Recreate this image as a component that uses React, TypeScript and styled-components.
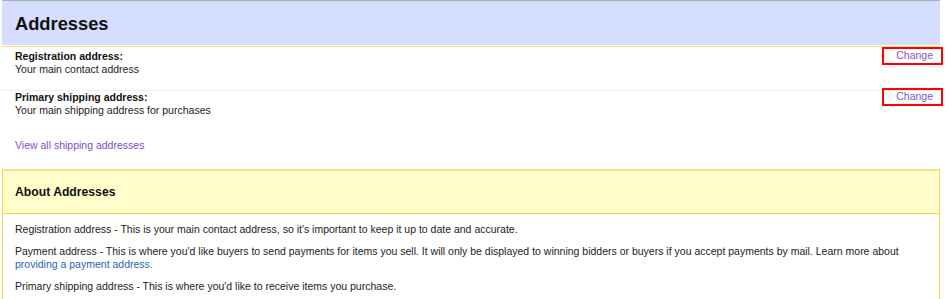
import React from "react";
import styled, { createGlobalStyle } from "styled-components";

const GlobalStyle = createGlobalStyle`
  html {
    overflow-y: scroll;
  }
  html::-webkit-scrollbar {
    width: 4px;
  }
  html::-webkit-scrollbar-track {
    background: #f1f1f1;
  }
  html::-webkit-scrollbar-thumb {
    background: #c4c4c4;
  }
  body {
    margin: 0;
    background: #fff;
    font-family: "Liberation Sans", Arial, sans-serif;
    font-size: 10.5px;
    color: #222;
  }
`;

const Page = styled.div`
  width: 938px;
  margin-left: 2px;
  padding-bottom: 40px;
`;

const PageHeader = styled.div`
  height: 43px;
  border-top: 1px solid #aeaeae;
  background: #d5defe;
  display: flex;
  align-items: center;
  padding: 1px 0 0 13px;
  box-shadow: 0 1px 0 #fff, 0 2px 0 #f8de7c;
  margin-bottom: 3px;
`;

const PageTitle = styled.h1`
  margin: 0;
  font-size: 18.3px;
  font-weight: bold;
  color: #111;
`;

const Row = styled.div<{ $first?: boolean }>`
  display: flex;
  justify-content: space-between;
  align-items: flex-start;
  padding: ${(p) => (p.$first ? "2px 0 14px 13px" : "0 0 0 13px")};
  border-top: ${(p) => (p.$first ? "none" : "1px solid #efefef")};
  line-height: 13px;
`;

const Label = styled.div`
  font-weight: bold;
  color: #111;
`;

const Hint = styled.div`
  color: #222;
`;

const ChangeLink = styled.a`
  display: block;
  color: #7a5ac9;
  text-decoration: none;
  line-height: 13px;
  padding: 0 8px 1px 12px;
  margin: -1px -1px 0 0;
  outline: 2px solid #f00;
  cursor: pointer;
`;

const ViewAll = styled.a`
  display: inline-block;
  margin: 22px 0 17px 13px;
  line-height: 13px;
  color: #7a4fc8;
  text-decoration: none;
`;

const AboutBox = styled.div`
  border: 1px solid #f6d64a;
  border-top: 2px solid #fbe384;
`;

const AboutHeader = styled.div`
  height: 42px;
  background: #fffdcb;
  border-bottom: 1px solid #f6d64a;
  display: flex;
  align-items: center;
  padding-left: 12px;
`;

const AboutTitle = styled.h2`
  margin: 0;
  font-size: 12.2px;
  font-weight: bold;
  color: #111;
`;

const AboutBody = styled.div`
  padding: 9px 12px 10px;
`;

const Para = styled.p`
  margin: 0 0 9.5px;
  line-height: 12.5px;
  color: #222;
`;

const InlineLink = styled.a`
  color: #2b63b7;
  text-decoration: none;
`;

export default function App() {
  return (
    <Page>
      <GlobalStyle />
      <PageHeader>
        <PageTitle>Addresses</PageTitle>
      </PageHeader>

      <Row $first>
        <div>
          <Label>Registration address:</Label>
          <Hint>Your main contact address</Hint>
        </div>
        <ChangeLink>Change</ChangeLink>
      </Row>
      <Row>
        <div>
          <Label>Primary shipping address:</Label>
          <Hint>Your main shipping address for purchases</Hint>
        </div>
        <ChangeLink>Change</ChangeLink>
      </Row>

      <ViewAll>View all shipping addresses</ViewAll>

      <AboutBox>
        <AboutHeader>
          <AboutTitle>About Addresses</AboutTitle>
        </AboutHeader>
        <AboutBody>
          <Para>
            Registration address - This is your main contact address, so it's important to keep it up to date and
            accurate.
          </Para>
          <Para>
            Payment address - This is where you'd like buyers to send payments for items you sell. It will only be
            displayed to winning bidders or buyers if you accept payments by mail. Learn more about
            <br />
            <InlineLink>providing a payment address.</InlineLink>
          </Para>
          <Para>Primary shipping address - This is where you'd like to receive items you purchase.</Para>
          <Para>
            Additional shipping addresses - You can save other addresses and choose one of them when you check out.
          </Para>
          <Para>
            Changes you make here will apply to future purchases. Orders you've already placed will keep the address
            used at checkout.
          </Para>
          <Para>
            If you have questions about your addresses, <InlineLink>contact Customer Support.</InlineLink>
          </Para>
        </AboutBody>
      </AboutBox>
    </Page>
  );
}
